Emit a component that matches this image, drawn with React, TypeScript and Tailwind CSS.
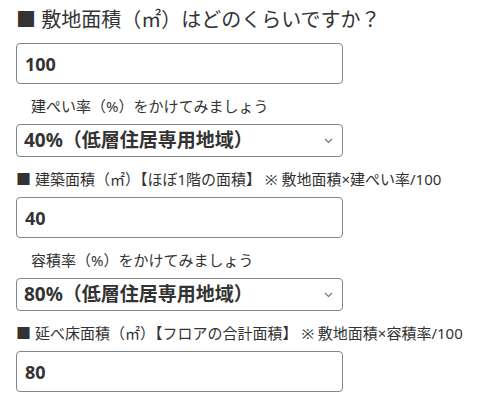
import React from "react";

const font = "font-['Noto_Sans','Noto_Sans_CJK_JP',sans-serif]";

function Chevron() {
  return (
    <svg
      className="pointer-events-none absolute right-[10px] top-1/2 -translate-y-1/2"
      width="9"
      height="6"
      viewBox="0 0 9 6"
      fill="none"
    >
      <path d="M1 1l3.5 3.5L8 1" stroke="#6b6f75" strokeWidth="1.1" />
    </svg>
  );
}

function TextBox({ value }: { value: string }) {
  return (
    <input
      readOnly
      value={value}
      className="block h-[41px] w-[327px] rounded-[4px] border border-[#80868b] bg-white px-[8px] text-[18px] font-bold text-[#333] outline-none"
    />
  );
}

function SelectBox({ value }: { value: string }) {
  return (
    <div className="relative w-[327px]">
      <select
        value={value}
        onChange={() => {}}
        className="block h-[33px] w-[327px] appearance-none rounded-[4px] border border-[#80868b] bg-white pl-[7px] text-[19px] font-bold text-[#333] outline-none"
      >
        <option value={value}>{value}</option>
      </select>
      <Chevron />
    </div>
  );
}

function Header({ main, note }: { main: string; note: string }) {
  return (
    <div className="mt-[10px] mb-[6px] flex gap-[4px] text-[15px] leading-[24px] whitespace-nowrap">
      <span>{main}</span>
      <span>{note}</span>
    </div>
  );
}

function Hint({ text }: { text: string }) {
  return <div className="mt-[10px] mb-[6px] pl-[15px] text-[15px] leading-[24px]">{text}</div>;
}

export default function App() {
  return (
    <div className={`${font} flex flex-col bg-white pl-4 pt-[6px] text-[#333] w-[487px] h-[404px]`}>
      <div className="mb-[9px] text-[20px] leading-[28px]">■ 敷地面積（㎡）はどのくらいですか？</div>
      <TextBox value="100" />
      <Hint text="建ぺい率（%）をかけてみましょう" />
      <SelectBox value="40%（低層住居専用地域）" />
      <Header main="■ 建築面積（㎡）【ほぼ1階の面積】" note="※ 敷地面積×建ぺい率/100" />
      <TextBox value="40" />
      <Hint text="容積率（%）をかけてみましょう" />
      <SelectBox value="80%（低層住居専用地域）" />
      <Header main="■ 延べ床面積（㎡）【フロアの合計面積】" note="※ 敷地面積×容積率/100" />
      <TextBox value="80" />
    </div>
  );
}
